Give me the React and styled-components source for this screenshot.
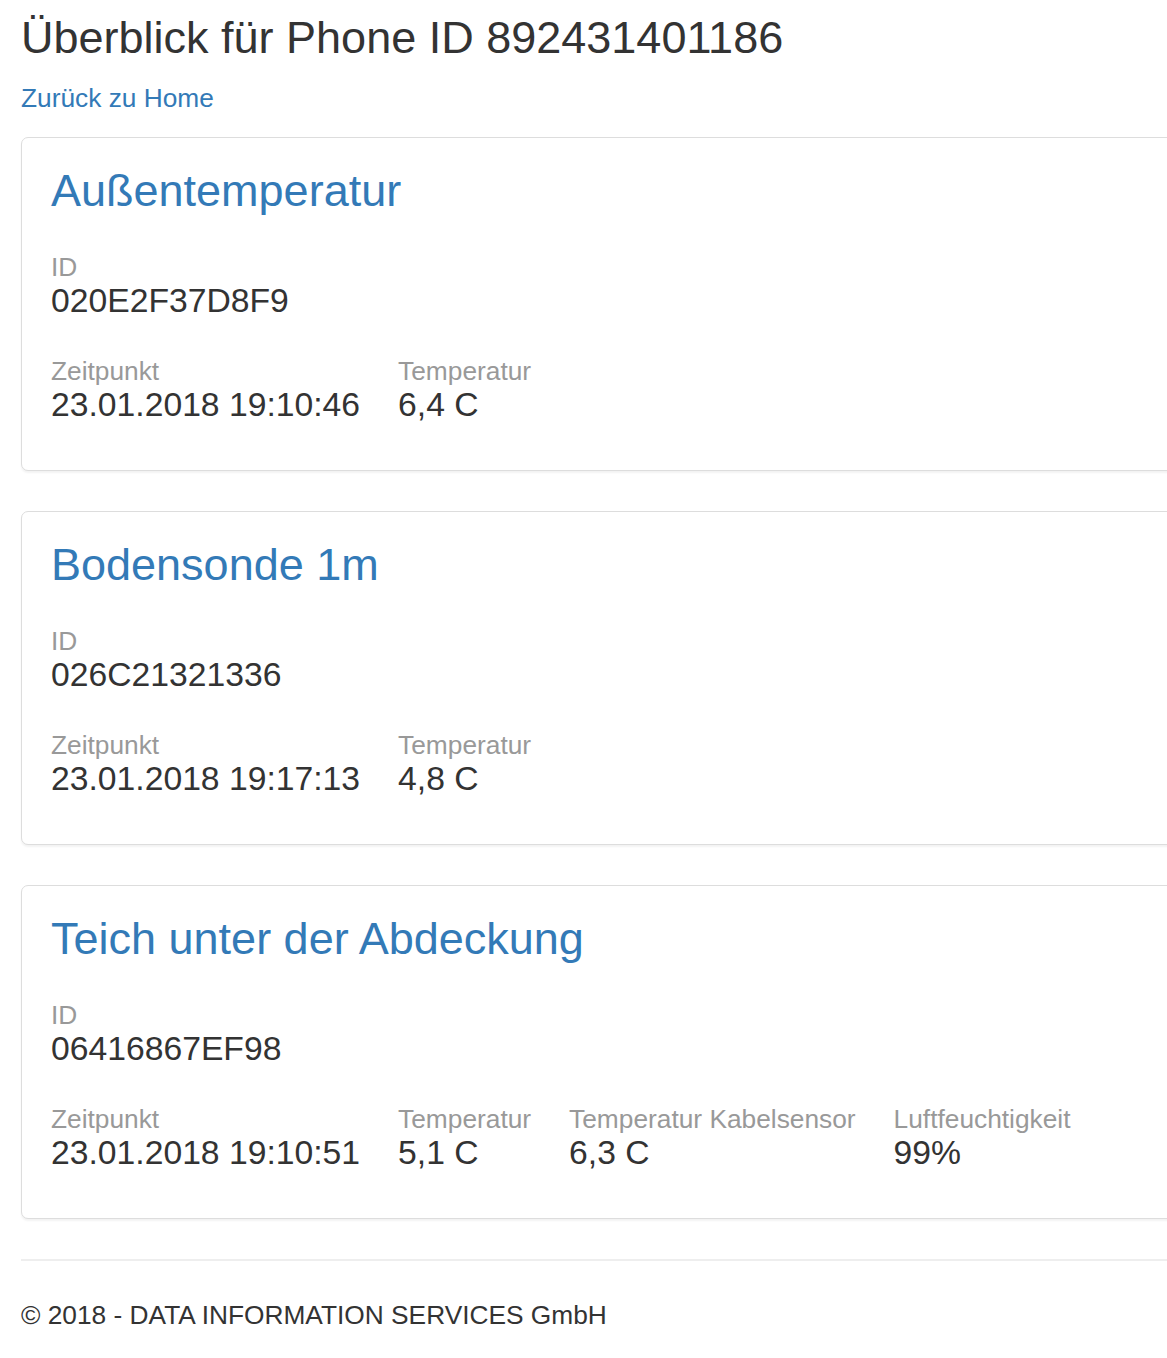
import React from "react";
import styled, { createGlobalStyle } from "styled-components";

const GlobalStyle = createGlobalStyle`
  html, body {
    margin: 0;
    padding: 0;
    background: #ffffff;
    overflow-x: hidden;
  }
  body {
    font-family: "Liberation Sans", Arial, Helvetica, sans-serif;
    color: #333333;
  }
  * { box-sizing: border-box; }
`;

const Page = styled.div`
  width: 1220px;
  padding: 0 0 0 21px;
`;

const Title = styled.h1`
  margin: 12.5px 0 18px;
  font-size: 45px;
  line-height: 49px;
  font-weight: 400;
  color: #333333;
`;

const BackLink = styled.a`
  display: block;
  margin-bottom: 20px;
  font-size: 26.3px;
  line-height: 37px;
  color: #337ab7;
  text-decoration: none;
`;

const Panel = styled.section`
  border: 1px solid #dddddd;
  border-radius: 7px;
  box-shadow: 0 2px 2px rgba(0, 0, 0, 0.05);
  padding: 28px 29px 47.5px;
  margin-bottom: 39.7px;
  background: #ffffff;
`;

const PanelTitle = styled.h2`
  margin: 0 0 37px;
  font-size: 45px;
  line-height: 49px;
  font-weight: 400;
  color: #337ab7;
`;

const Row = styled.div`
  display: flex;
  gap: 38px;
  & + & {
    margin-top: 37px;
  }
`;

const Field = styled.div`
  display: flex;
  flex-direction: column;
`;

const Label = styled.span`
  font-size: 26.3px;
  line-height: 30px;
  color: #999999;
`;

const Value = styled.span`
  font-size: 33.7px;
  line-height: 37px;
  color: #333333;
`;

const Rule = styled.hr`
  border: 0;
  border-top: 2px solid #eeeeee;
  margin: 0 0 36px;
`;

const Footer = styled.p`
  margin: 0 0 18px;
  font-size: 26.3px;
  line-height: 37px;
  color: #333333;
`;

const sensors = [
  {
    name: "Außentemperatur",
    id: "020E2F37D8F9",
    fields: [
      ["Zeitpunkt", "23.01.2018 19:10:46"],
      ["Temperatur", "6,4 C"],
    ],
  },
  {
    name: "Bodensonde 1m",
    id: "026C21321336",
    fields: [
      ["Zeitpunkt", "23.01.2018 19:17:13"],
      ["Temperatur", "4,8 C"],
    ],
  },
  {
    name: "Teich unter der Abdeckung",
    id: "06416867EF98",
    fields: [
      ["Zeitpunkt", "23.01.2018 19:10:51"],
      ["Temperatur", "5,1 C"],
      ["Temperatur Kabelsensor", "6,3 C"],
      ["Luftfeuchtigkeit", "99%"],
    ],
  },
];

export default function App() {
  return (
    <>
      <GlobalStyle />
      <Page>
        <Title>Überblick für Phone ID 892431401186</Title>
        <BackLink href="#">Zurück zu Home</BackLink>
        {sensors.map((s) => (
          <Panel key={s.id}>
            <PanelTitle>{s.name}</PanelTitle>
            <Row>
              <Field>
                <Label>ID</Label>
                <Value>{s.id}</Value>
              </Field>
            </Row>
            <Row>
              {s.fields.map(([label, value]) => (
                <Field key={label}>
                  <Label>{label}</Label>
                  <Value>{value}</Value>
                </Field>
              ))}
            </Row>
          </Panel>
        ))}
        <Rule />
        <Footer>© 2018 - DATA INFORMATION SERVICES GmbH</Footer>
      </Page>
    </>
  );
}
